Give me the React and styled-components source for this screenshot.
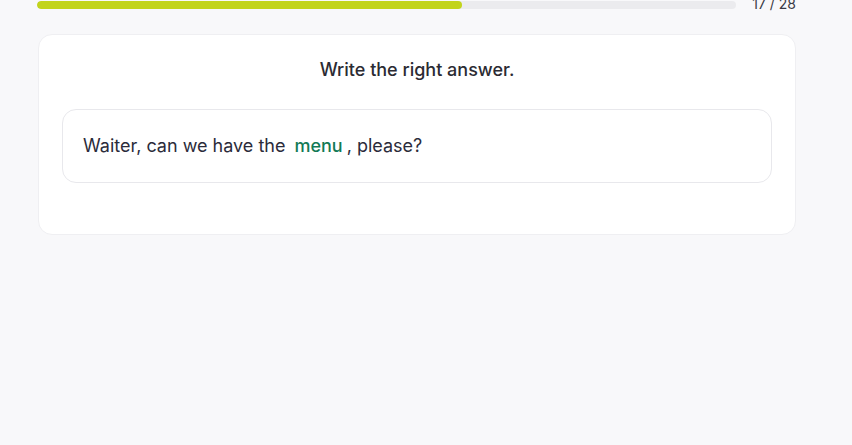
import styled, { createGlobalStyle } from "styled-components";

const GlobalStyle = createGlobalStyle`
  html, body {
    margin: 0;
    padding: 0;
    background: #f8f8fa;
    font-family: Inter, "Noto Sans", sans-serif;
    color: #2b2b33;
  }
`;

const Page = styled.div`
  width: 758px;
  margin-left: 38px;
  padding-bottom: 200px;
`;

const ProgressRow = styled.div`
  display: flex;
  align-items: center;
  gap: 16px;
  height: 24px;
  margin-top: -7px;
  margin-left: -1px;
`;

const Track = styled.div`
  flex: 1;
  height: 8px;
  border-radius: 4px;
  background: #ebebee;
  overflow: hidden;
`;

const Fill = styled.div`
  height: 100%;
  border-radius: 4px;
  background: #c2d41c;
`;

const Counter = styled.span`
  font-size: 14px;
  color: #3a3a44;
  white-space: nowrap;
  margin-top: -3px;
`;

const Card = styled.section`
  margin-top: 17px;
  background: #fff;
  border: 1px solid #efeff2;
  border-radius: 14px;
  padding: 23px 23px 51px;
  display: flex;
  flex-direction: column;
  gap: 27px;
`;

const Title = styled.h2`
  margin: 0;
  text-align: center;
  font-size: 18px;
  font-weight: 500;
  line-height: 24px;
  color: #2b2b33;
`;

const Sentence = styled.div`
  border: 1px solid #e8e8ec;
  border-radius: 14px;
  padding: 24px 20px;
  font-size: 18px;
  line-height: 24px;
  color: #2b2b3a;
`;

const Answer = styled.span`
  color: #137a56;
  font-weight: 500;
  margin: 0 4px 0 9px;
`;

export default function App() {
  const done = 17;
  const total = 28;
  return (
    <>
      <GlobalStyle />
      <Page>
        <ProgressRow>
          <Track>
            <Fill style={{ width: `${(done / total) * 100}%` }} />
          </Track>
          <Counter>
            {done} / {total}
          </Counter>
        </ProgressRow>
        <Card>
          <Title>Write the right answer.</Title>
          <Sentence>
            Waiter, can we have the<Answer>menu</Answer>, please?
          </Sentence>
        </Card>
      </Page>
    </>
  );
}
